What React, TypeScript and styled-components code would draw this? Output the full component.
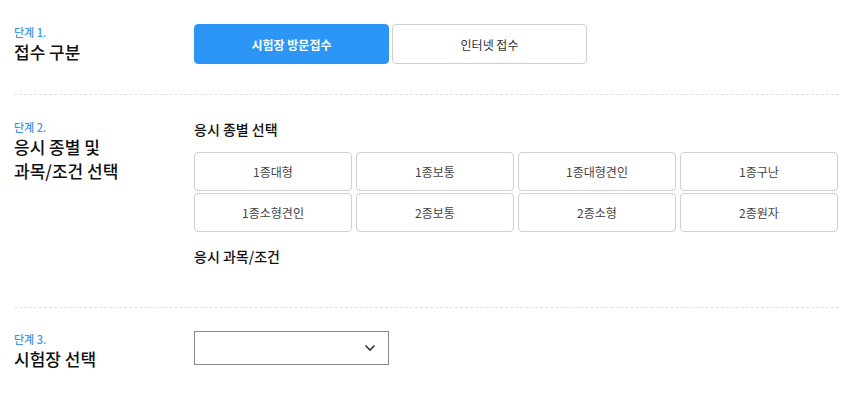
import React from "react";
import styled, { createGlobalStyle } from "styled-components";

const GlobalStyle = createGlobalStyle`
  body {
    margin: 0;
    background: #fff;
    font-family: "Noto Sans CJK KR", "Noto Sans", sans-serif;
    color: #111;
  }
  * { box-sizing: border-box; }
`;

const Page = styled.div`
  padding: 0 18px 0 14px;
`;

const Section = styled.section<{ $last?: boolean }>`
  display: grid;
  grid-template-columns: 180px 1fr;
  padding: ${(p) => (p.$last ? "23px 0 24px" : "24px 0 30px")};
  border-bottom: ${(p) => (p.$last ? "none" : "1px dashed #e2e2e2")};
`;

const Label = styled.div`
  display: flex;
  flex-direction: column;
`;

const Step = styled.span`
  font-size: 11px;
  line-height: 16px;
  color: #3d93ea;
  font-weight: 500;
`;

const Title = styled.h2`
  margin: 0;
  font-size: 17px;
  line-height: 24px;
  font-weight: 500;
  color: #111;
`;

const Body = styled.div`
  display: flex;
  flex-direction: column;
`;

const ToggleRow = styled.div`
  display: flex;
  gap: 3px;
`;

const Toggle = styled.button<{ $active?: boolean }>`
  width: 195px;
  height: 40px;
  border-radius: 4px;
  font-family: inherit;
  font-size: 12px;
  font-weight: ${(p) => (p.$active ? 700 : 400)};
  color: ${(p) => (p.$active ? "#fff" : "#333")};
  background: ${(p) => (p.$active ? "#2b96f6" : "#fff")};
  border: 1px solid ${(p) => (p.$active ? "#2b96f6" : "#cfcfcf")};
  cursor: pointer;
`;

const SubHeading = styled.h3`
  margin: 0;
  font-size: 14px;
  line-height: 20px;
  font-weight: 500;
  color: #111;
`;

const TypeGrid = styled.div`
  display: grid;
  grid-template-columns: repeat(4, 158px);
  column-gap: 4px;
  row-gap: 2px;
  margin: 13px 0 14px;
`;

const TypeButton = styled.button`
  height: 39px;
  border: 1px solid #d0d0d0;
  border-radius: 4px;
  background: #fff;
  font-family: inherit;
  font-size: 12px;
  color: #444;
  cursor: pointer;
`;

const ConditionArea = styled.div`
  min-height: 11px;
`;

const Select = styled.div`
  width: 195px;
  height: 34px;
  border: 1px solid #888;
  display: flex;
  align-items: center;
  justify-content: flex-end;
  padding-right: 12px;
`;

const types = [
  "1종대형",
  "1종보통",
  "1종대형견인",
  "1종구난",
  "1종소형견인",
  "2종보통",
  "2종소형",
  "2종원자",
];

export default function App() {
  return (
    <Page>
      <GlobalStyle />
      <Section>
        <Label>
          <Step>단계 1.</Step>
          <Title>접수 구분</Title>
        </Label>
        <Body>
          <ToggleRow>
            <Toggle $active>시험장 방문접수</Toggle>
            <Toggle>인터넷 접수</Toggle>
          </ToggleRow>
        </Body>
      </Section>
      <Section>
        <Label>
          <Step>단계 2.</Step>
          <Title>
            응시 종별 및<br />
            과목/조건 선택
          </Title>
        </Label>
        <Body>
          <SubHeading>응시 종별 선택</SubHeading>
          <TypeGrid>
            {types.map((t) => (
              <TypeButton key={t}>{t}</TypeButton>
            ))}
          </TypeGrid>
          <SubHeading>응시 과목/조건</SubHeading>
          <ConditionArea />
        </Body>
      </Section>
      <Section $last>
        <Label>
          <Step>단계 3.</Step>
          <Title>시험장 선택</Title>
        </Label>
        <Body>
          <Select>
            <svg width="12" height="8" viewBox="0 0 12 8">
              <path d="M1.5 1.5 L6 6 L10.5 1.5" fill="none" stroke="#333" strokeWidth="1.6" />
            </svg>
          </Select>
        </Body>
      </Section>
    </Page>
  );
}
